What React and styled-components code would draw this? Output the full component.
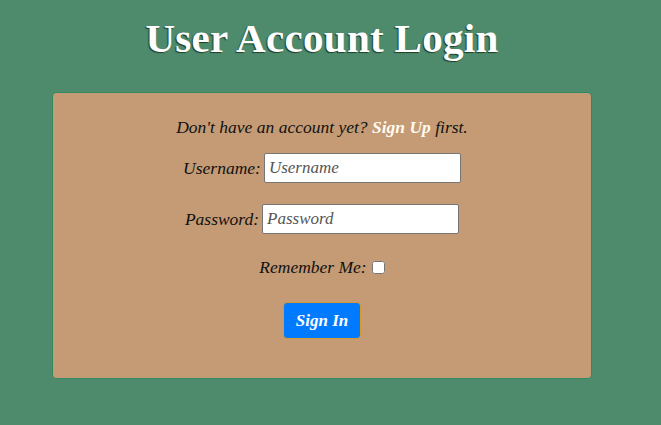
import styled, { createGlobalStyle } from "styled-components";

const GlobalStyle = createGlobalStyle`
  body {
    margin: 0;
    background: #4e8a6c;
    font-family: "Liberation Serif", "DejaVu Serif", serif;
  }
`;

const Page = styled.div`
  width: 644px;
  min-height: 425px;
  display: flex;
  flex-direction: column;
  align-items: center;
`;

const Title = styled.h1`
  margin: 14px 0 0;
  height: 56px;
  font-size: 41px;
  font-weight: bold;
  color: #ffffff;
  text-shadow: -1px 1px 1px #1f3d22;
  letter-spacing: 0.3px;
`;

const Card = styled.form`
  box-sizing: border-box;
  width: 540px;
  height: 287px;
  margin-top: 22px;
  padding-top: 24px;
  background: #c49b74;
  border: 1px solid #2f8a62;
  border-radius: 4px;
  display: flex;
  flex-direction: column;
  align-items: center;
  font-style: italic;
  font-size: 17.5px;
  color: #111;
`;

const Note = styled.p`
  margin: 0 0 15px;
`;

const SignUp = styled.a`
  font-weight: bold;
  color: #fffaf0;
  text-decoration: none;
`;

const Row = styled.label`
  display: flex;
  align-items: center;
  gap: 3px;
  margin-bottom: ${(p) => p.$gap || 21}px;
`;

const Input = styled.input`
  box-sizing: border-box;
  width: 197px;
  height: 30px;
  padding: 0 4px;
  border: 1px solid #767676;
  border-radius: 2px;
  font-family: inherit;
  font-style: italic;
  font-size: 17px;
  &::placeholder {
    color: #555;
  }
`;

const Check = styled.input`
  width: 13px;
  height: 13px;
  margin: 0 0 0 2px;
`;

const Button = styled.button`
  width: 78px;
  height: 37px;
  background: #007bff;
  border: 1px solid #d89a2b;
  border-radius: 4px;
  color: #fff;
  font-family: inherit;
  font-style: italic;
  font-weight: bold;
  font-size: 17px;
`;

export default function App() {
  return (
    <>
      <GlobalStyle />
      <Page>
        <Title>User Account Login</Title>
        <Card onSubmit={(e) => e.preventDefault()}>
          <Note>
            Don't have an account yet? <SignUp href="#">Sign Up</SignUp> first.
          </Note>
          <Row>
            Username:
            <Input placeholder="Username" />
          </Row>
          <Row $gap={23}>
            Password:
            <Input type="password" placeholder="Password" />
          </Row>
          <Row $gap={24}>
            Remember Me:
            <Check type="checkbox" />
          </Row>
          <Button type="submit">Sign In</Button>
        </Card>
      </Page>
    </>
  );
}
